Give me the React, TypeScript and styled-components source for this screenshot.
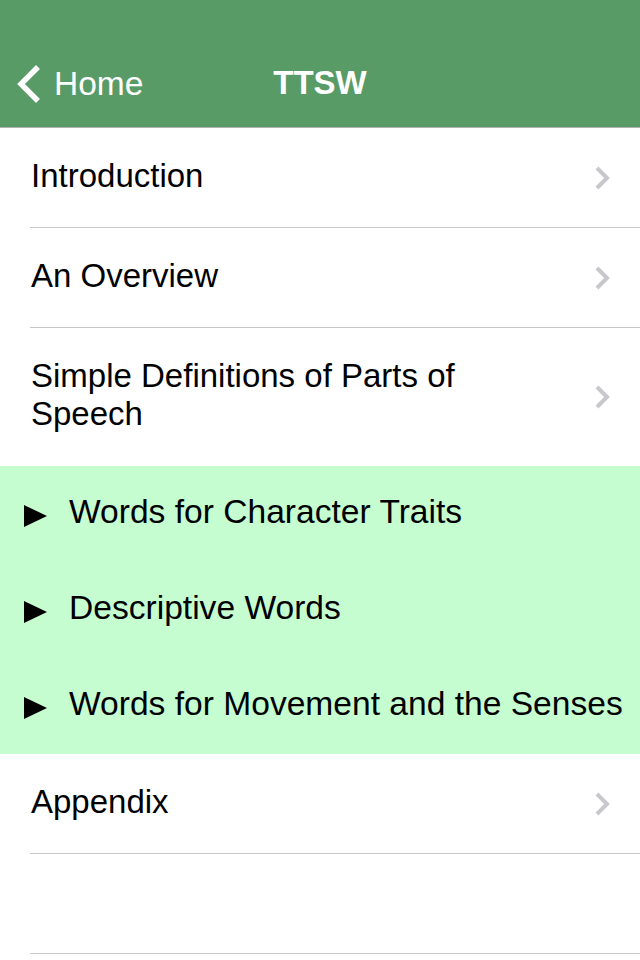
import React from "react";
import styled, { createGlobalStyle } from "styled-components";

const Global = createGlobalStyle`
  html, body { margin: 0; padding: 0; background: #ffffff; }
  body { font-family: "Liberation Sans", Arial, sans-serif; -webkit-font-smoothing: antialiased; }
  * { box-sizing: border-box; }
`;

const Screen = styled.div`
  width: 640px;
  height: 960px;
  background: #ffffff;
  overflow: hidden;
  display: flex;
  flex-direction: column;
`;

const Header = styled.header`
  height: 128px;
  background: #589b66;
  padding-top: 40px;
  border-bottom: 1px solid #b2b2b2;
  flex-shrink: 0;
`;

const NavBar = styled.div`
  position: relative;
  height: 87px;
  display: flex;
  align-items: center;
  justify-content: center;
`;

const BackButton = styled.div`
  position: absolute;
  left: 16px;
  top: 0;
  bottom: 0;
  display: flex;
  align-items: center;
  gap: 12px;
  color: #ffffff;
  font-size: 33.5px;
`;

const Title = styled.div`
  color: #ffffff;
  font-weight: bold;
  font-size: 33px;
  margin-top: -2px;
`;

const List = styled.div`
  display: flex;
  flex-direction: column;
`;

const Row = styled.div<{ $h: number; $sep?: boolean }>`
  position: relative;
  height: ${(p) => p.$h}px;
  display: flex;
  align-items: center;
  padding-left: 31px;
  &::after {
    content: "";
    display: ${(p) => (p.$sep ? "block" : "none")};
    position: absolute;
    left: 30px;
    right: 0;
    bottom: 0;
    height: 1px;
    background: #c8c7cc;
  }
`;

const Label = styled.div`
  flex: 1;
  font-size: 33px;
  line-height: 38px;
  color: #000000;
  padding-right: 90px;
  margin-top: -4px;
`;

const Chevron = styled.div`
  position: absolute;
  right: 29px;
  top: 50%;
  transform: translateY(-50%);
  display: flex;
`;

const Section = styled.div`
  background: #c6fdd0;
  display: flex;
  flex-direction: column;
`;

const SectionRow = styled.div`
  height: 96px;
  display: flex;
  align-items: center;
  padding-left: 24px;
  gap: 22px;
`;

const Triangle = styled.span`
  width: 0;
  height: 0;
  border-top: 11px solid transparent;
  border-bottom: 11px solid transparent;
  border-left: 23px solid #000000;
  margin-top: 4px;
`;

const SectionLabel = styled.div`
  font-size: 33.6px;
  color: #000000;
  white-space: nowrap;
  margin-top: -5px;
`;

const ChevronIcon = () => (
  <svg width="17" height="26" viewBox="0 0 17 26">
    <path d="M3 3 L13 13 L3 23" fill="none" stroke="#c7c7cc" strokeWidth="4" />
  </svg>
);

const BackIcon = () => (
  <svg width="26" height="40" viewBox="0 0 26 40">
    <path d="M22 3 L5 20 L22 37" fill="none" stroke="#ffffff" strokeWidth="5.5" />
  </svg>
);

const topRows = [
  { label: "Introduction", h: 100, sep: true },
  { label: "An Overview", h: 100, sep: true },
  { label: "Simple Definitions of Parts of Speech", h: 138, sep: false },
];

const sections = [
  "Words for Character Traits",
  "Descriptive Words",
  "Words for Movement and the Senses",
];

export default function App() {
  return (
    <Screen>
      <Global />
      <Header>
        <NavBar>
          <BackButton>
            <BackIcon />
            <span>Home</span>
          </BackButton>
          <Title>TTSW</Title>
        </NavBar>
      </Header>
      <List>
        {topRows.map((r) => (
          <Row key={r.label} $h={r.h} $sep={r.sep}>
            <Label>{r.label}</Label>
            <Chevron>
              <ChevronIcon />
            </Chevron>
          </Row>
        ))}
        <Section>
          {sections.map((s) => (
            <SectionRow key={s}>
              <Triangle />
              <SectionLabel>{s}</SectionLabel>
            </SectionRow>
          ))}
        </Section>
        <Row $h={100} $sep>
          <Label>Appendix</Label>
          <Chevron>
            <ChevronIcon />
          </Chevron>
        </Row>
        <Row $h={100} $sep />
      </List>
    </Screen>
  );
}
